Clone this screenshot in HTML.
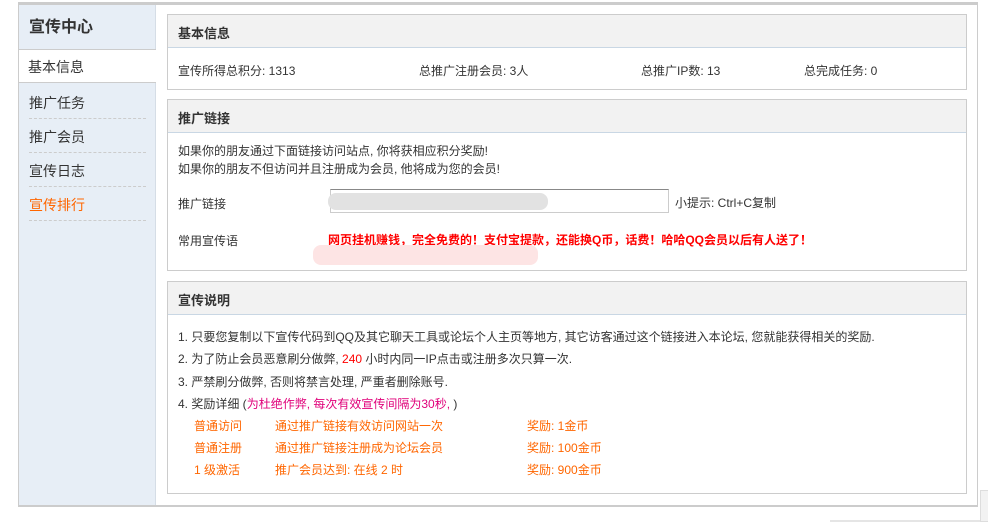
<!DOCTYPE html>
<html><head><meta charset="utf-8"><style>
*{margin:0;padding:0;box-sizing:border-box}
body{width:988px;height:526px;background:#fff;font-family:"Liberation Sans","Noto Sans CJK SC",sans-serif;font-size:12px;color:#333;position:relative;overflow:hidden}
.a{position:absolute;white-space:nowrap}
.outer{position:absolute;left:18px;top:2px;width:960px;height:505px;border:1px solid #ccc;border-top:3px solid #ccc;border-bottom:2px solid #ccc}
.side{position:absolute;left:19px;top:5px;width:137px;height:500px;background:#e7eef6;border-right:1px solid #d5dde6}
.side .t{position:absolute;left:10px;top:8px;font-size:16px;font-weight:bold;color:#333}
.side .cur{position:absolute;left:0;top:44px;width:137px;height:34px;background:#fff;border-top:1px solid #ccc;border-bottom:1px solid #ccc;font-size:14px;padding:7px 0 0 9px}
.it{position:absolute;left:10px;width:117px;height:34px;font-size:14px;padding-top:8px;border-bottom:1px dashed #ccc}
.p{position:absolute;left:167px;width:800px;border:1px solid #ccc;background:#fff}
.p .h{height:33px;background:#f2f2f2;border-bottom:1px solid #c9d7e4;font-weight:bold;font-size:13px;padding:8px 0 0 10px}
.o{color:#f60}
</style></head><body>
<div class="outer"></div>
<div class="side">
<div class="t">宣传中心</div>
<div class="cur">基本信息</div>
<div class="it" style="top:80px">推广任务</div>
<div class="it" style="top:114px">推广会员</div>
<div class="it" style="top:148px">宣传日志</div>
<div class="it o" style="top:182px">宣传排行</div>
</div>
<div class="p" style="top:14px;height:76px"><div class="h">基本信息</div>
<span class="a" style="left:10px;top:47px">宣传所得总积分: 1313</span>
<span class="a" style="left:251px;top:47px">总推广注册会员: 3人</span>
<span class="a" style="left:473px;top:47px">总推广IP数: 13</span>
<span class="a" style="left:636px;top:47px">总完成任务: 0</span>
</div>
<div class="p" style="top:99px;height:172px"><div class="h">推广链接</div>
<span class="a" style="left:10px;top:42px">如果你的朋友通过下面链接访问站点, 你将获相应积分奖励!</span>
<span class="a" style="left:10px;top:60px">如果你的朋友不但访问并且注册成为会员, 他将成为您的会员!</span>
<span class="a" style="left:10px;top:95px">推广链接</span>
<div class="a" style="left:162px;top:89px;width:339px;height:24px;border:1px solid #ccc;border-top-color:#888"><div style="position:absolute;left:-3px;top:3px;width:220px;height:17px;background:#e2e2e2;border-radius:8px"></div></div>
<span class="a" style="left:507px;top:94px">小提示: Ctrl+C复制</span>
<span class="a" style="left:10px;top:132px">常用宣传语</span>
<span class="a" style="left:160px;top:131px;color:#f00;font-weight:bold">网页挂机赚钱，完全免费的！支付宝提款，还能换Q币，话费！哈哈QQ会员以后有人送了！</span>
<div class="a" style="left:145px;top:145px;width:225px;height:20px;background:#fde4e4;border-radius:8px"></div>
</div>
<div class="p" style="top:281px;height:213px"><div class="h">宣传说明</div>
<span class="a" style="left:10px;top:46px">1. 只要您复制以下宣传代码到QQ及其它聊天工具或论坛个人主页等地方, 其它访客通过这个链接进入本论坛, 您就能获得相关的奖励.</span>
<span class="a" style="left:10px;top:68px">2. 为了防止会员恶意刷分做弊, <span style="color:#f00">240</span> 小时内同一IP点击或注册多次只算一次.</span>
<span class="a" style="left:10px;top:91px">3. 严禁刷分做弊, 否则将禁言处理, 严重者删除账号.</span>
<span class="a" style="left:10px;top:113px">4. 奖励详细 (<span style="color:#e0007a">为杜绝作弊, 每次有效宣传间隔为30秒, </span>)</span>
<span class="a o" style="left:26px;top:135px">普通访问</span><span class="a o" style="left:107px;top:135px">通过推广链接有效访问网站一次</span><span class="a o" style="left:359px;top:135px">奖励: 1金币</span>
<span class="a o" style="left:26px;top:157px">普通注册</span><span class="a o" style="left:107px;top:157px">通过推广链接注册成为论坛会员</span><span class="a o" style="left:359px;top:157px">奖励: 100金币</span>
<span class="a o" style="left:26px;top:179px">1 级激活</span><span class="a o" style="left:107px;top:179px">推广会员达到: 在线 2 时</span><span class="a o" style="left:359px;top:179px">奖励: 900金币</span>
</div>
<div class="a" style="left:830px;top:520px;width:160px;height:2px;background:#e5e5e5"></div>
<div class="a" style="left:980px;top:490px;width:10px;height:32px;background:#f2f2f2;border:1px solid #ddd"></div>
</body></html>
